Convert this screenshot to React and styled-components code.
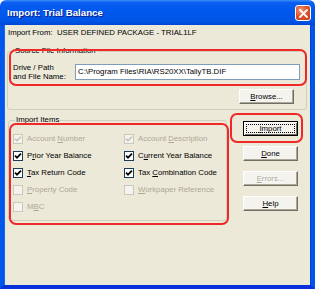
import React from "react";
import styled, { createGlobalStyle } from "styled-components";

const Global = createGlobalStyle`
  html, body {
    margin: 0;
    padding: 0;
    background: #ffffff;
  }
  body {
    font-family: "Liberation Sans", Arial, sans-serif;
    font-size: 7.8px;
    color: #000000;
  }
`;

const Window = styled.div`
  position: relative;
  width: 315px;
  height: 289px;
  display: flex;
  flex-direction: column;
  box-sizing: border-box;
  overflow: hidden;
`;

const TitleBar = styled.div`
  height: 25px;
  flex-shrink: 0;
  display: flex;
  align-items: center;
  padding: 0 4px 0 7px;
  box-sizing: border-box;
  border-radius: 6px 6px 0 0;
  background: linear-gradient(
    to bottom,
    #3d8cf5 0%,
    #0a5ff0 10%,
    #0058ee 40%,
    #0055e5 85%,
    #0045d6 100%
  );
`;

const Title = styled.span`
  flex: 1;
  color: #ffffff;
  font-weight: bold;
  font-size: 9.7px;
  text-shadow: 1px 1px 0 #0a1c8a;
`;

const CloseButton = styled.div`
  width: 16px;
  height: 16px;
  box-sizing: border-box;
  border: 1px solid #ffffff;
  border-radius: 3px;
  background: radial-gradient(circle at 35% 30%, #f19a7c 0%, #e0552e 45%, #c33a16 100%);
  display: flex;
  align-items: center;
  justify-content: center;
  margin-top: 1px;
`;

const Client = styled.div`
  flex: 1;
  background: #ece9d8;
  border-left: 4px solid #0055ea;
  border-right: 4px solid #0055ea;
  border-bottom: 4px solid #0831d9;
  box-shadow: inset 1px 0 0 #166aee, inset -1px 0 0 #0046d0;
  padding: 3px 0 0 3px;
  display: flex;
  flex-direction: column;
`;

const InfoLine = styled.div`
  height: 10px;
  line-height: 10px;
  margin-left: 1px;
  white-space: pre;
`;

const Group = styled.fieldset`
  margin: ${(p) => p.$top}px 0 0 ${(p) => p.$left || 0}px;
  padding: 0 ${(p) => p.$padRight}px ${(p) => p.$padBottom}px ${(p) => p.$padLeft}px;
  border: 1px solid #d0d0bf;
  border-radius: 3px;
  width: ${(p) => p.$width}px;
  box-sizing: border-box;
  min-width: 0;
`;

const Legend = styled.legend`
  padding: 0 1px;
  margin-left: ${(p) => p.$shift}px;
  line-height: 10px;
  height: 10px;
  color: #000000;
`;

const PathRow = styled.div`
  display: flex;
  align-items: center;
  margin-top: 6px;
`;

const PathLabel = styled.div`
  width: 62px;
  flex-shrink: 0;
  line-height: 9px;
  padding-top: 1px;
`;

const PathInput = styled.div`
  flex: 1;
  height: 16px;
  box-sizing: border-box;
  border: 1px solid #7f9db9;
  background: #ffffff;
  line-height: 14px;
  padding-left: 2px;
  white-space: nowrap;
  overflow: hidden;
`;

const BrowseRow = styled.div`
  display: flex;
  justify-content: flex-end;
  margin-top: 8px;
  padding-right: 6px;
`;

const Lower = styled.div`
  display: flex;
  align-items: flex-start;
  margin-top: 5px;
`;

const ItemsGrid = styled.div`
  display: grid;
  grid-template-columns: 111px 1fr;
  grid-auto-rows: 17px;
  margin-top: 5px;
`;

const Item = styled.label`
  display: flex;
  align-items: center;
  gap: 4px;
  white-space: nowrap;
  color: ${(p) => (p.$disabled ? "#aca899" : "#000000")};
`;

const Box = styled.span`
  width: 10px;
  height: 10px;
  box-sizing: border-box;
  flex-shrink: 0;
  border: 1px solid ${(p) => (p.$disabled ? "#cac8bb" : "#1c3a5a")};
  background: ${(p) => (p.$disabled ? "#f4f3ee" : "#ffffff")};
  display: flex;
  align-items: center;
  justify-content: center;
`;

const ButtonColumn = styled.div`
  display: flex;
  flex-direction: column;
  gap: 10px;
  margin-left: auto;
  margin-right: 13px;
  padding-top: 6px;
`;

const Button = styled.div`
  width: 55px;
  height: 15px;
  box-sizing: border-box;
  display: flex;
  align-items: center;
  justify-content: center;
  position: relative;
  background: #f4f3ee;
  border: 1px solid;
  border-color: ${(p) =>
    p.$default ? "#000000" : "#ffffff #716f64 #716f64 #ffffff"};
  box-shadow: ${(p) =>
    p.$default
      ? "inset 1px 1px 0 #ffffff, inset -1px -1px 0 #716f64"
      : "inset -1px -1px 0 #aca899"};
  color: ${(p) => (p.$disabled ? "#aca899" : "#000000")};
  text-shadow: ${(p) => (p.$disabled ? "1px 1px 0 #ffffff" : "none")};
`;

const Focus = styled.span`
  position: absolute;
  inset: 2px;
  border: 1px dotted #000000;
`;

const Highlight = styled.div`
  position: absolute;
  left: ${(p) => p.$x}px;
  top: ${(p) => p.$y}px;
  width: ${(p) => p.$w}px;
  height: ${(p) => p.$h}px;
  border: 2px solid #f02828;
  border-radius: 7px;
  box-sizing: border-box;
  pointer-events: none;
`;

const Check = ({ color }) => (
  <svg width="8" height="8" viewBox="0 0 8 8">
    <path
      d="M1 3.6 L3 5.7 L7 1.6"
      fill="none"
      stroke={color}
      strokeWidth="1.7"
    />
  </svg>
);

const CheckItem = ({ checked, disabled, children }) => (
  <Item $disabled={disabled}>
    <Box $disabled={disabled}>
      {checked && <Check color={disabled ? "#cac8bb" : "#000000"} />}
    </Box>
    <span>{children}</span>
  </Item>
);

const U = styled.u`
  text-decoration: underline;
`;

export default function App() {
  return (
    <>
      <Global />
      <Window>
        <TitleBar>
          <Title>Import: Trial Balance</Title>
          <CloseButton>
            <svg width="9" height="9" viewBox="0 0 9 9">
              <path
                d="M1 1 L8 8 M8 1 L1 8"
                stroke="#ffffff"
                strokeWidth="1.8"
                strokeLinecap="square"
              />
            </svg>
          </CloseButton>
        </TitleBar>
        <Client>
          <InfoLine>Import From:  USER DEFINED PACKAGE - TRIAL1LF</InfoLine>

          <Group $top={8} $width={300} $padLeft={5} $padRight={6} $padBottom={5}>
            <Legend $shift={1}>Source File Information</Legend>
            <PathRow>
              <PathLabel>
                Drive / Path
                <br />
                and File Name:
              </PathLabel>
              <PathInput>C:\Program Files\RIA\RS20XX\TallyTB.DIF</PathInput>
            </PathRow>
            <BrowseRow>
              <Button>
                <span>
                  <U>B</U>rowse...
                </span>
              </Button>
            </BrowseRow>
          </Group>

          <Lower>
            <Group $top={0} $left={1} $width={219} $padLeft={4} $padRight={4} $padBottom={5}>
              <Legend $shift={2}>Import Items</Legend>
              <ItemsGrid>
                <CheckItem checked disabled>
                  Account <U>N</U>umber
                </CheckItem>
                <CheckItem checked disabled>
                  Account <U>D</U>escription
                </CheckItem>
                <CheckItem checked>
                  P<U>r</U>ior Year Balance
                </CheckItem>
                <CheckItem checked>
                  C<U>u</U>rrent Year Balance
                </CheckItem>
                <CheckItem checked>
                  <U>T</U>ax Return Code
                </CheckItem>
                <CheckItem checked>
                  Tax <U>C</U>ombination Code
                </CheckItem>
                <CheckItem disabled>
                  <U>P</U>roperty Code
                </CheckItem>
                <CheckItem disabled>
                  <U>W</U>orkpaper Reference
                </CheckItem>
                <CheckItem disabled>
                  M<U>B</U>C
                </CheckItem>
              </ItemsGrid>
            </Group>

            <ButtonColumn>
              <Button $default>
                <Focus />
                <span>
                  <U>I</U>mport
                </span>
              </Button>
              <Button>
                <span>
                  <U>D</U>one
                </span>
              </Button>
              <Button $disabled>
                <span>
                  <U>E</U>rrors...
                </span>
              </Button>
              <Button>
                <span>
                  <U>H</U>elp
                </span>
              </Button>
            </ButtonColumn>
          </Lower>
        </Client>

        <Highlight $x={9} $y={49} $w={298} $h={37} />
        <Highlight $x={230} $y={113} $w={73} $h={30} />
        <Highlight $x={9} $y={123} $w={220} $h={102} />
      </Window>
    </>
  );
}
